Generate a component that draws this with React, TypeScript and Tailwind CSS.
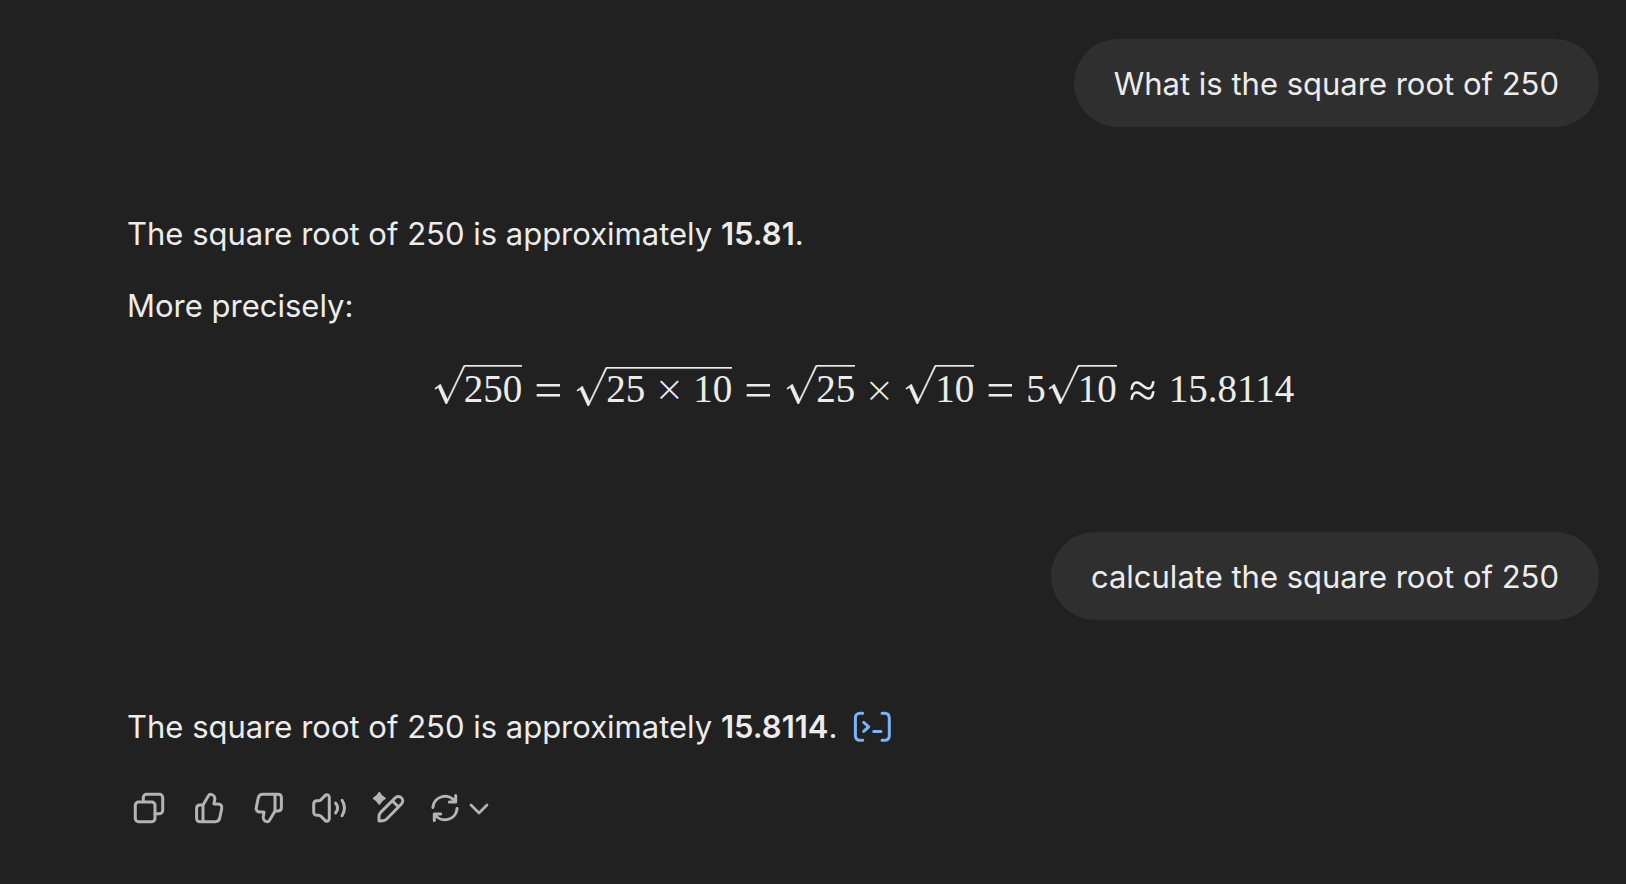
import type { ReactNode } from "react";

function UserMessage({ children }: { children: ReactNode }) {
  return (
    <div className="flex justify-end">
      <p className="rounded-full bg-[#2f2f2f] px-10 pb-[15px] pt-[17px]">{children}</p>
    </div>
  );
}

const SURD =
  "M95,702c-2.7,0,-7.17,-2.7,-13.5,-8c-5.8,-5.3,-9.5,-10,-9.5,-14c0,-2,0.3,-3.3,1,-4c1.3,-2.7,23.83,-20.7,67.5,-54c44.2,-33.3,65.8,-50.3,66.5,-51c1.3,-1.3,3,-2,5,-2c4.7,0,8.7,3.3,12,10s173,378,173,378c0.7,0,35.3,-71,104,-213c68.7,-142,137.5,-285,206.5,-429c69,-144,104.5,-217.7,106.5,-221l0,0c5.3,-9.3,12,-14,20,-14H400000v40H845.3s-225.3,467,-225.3,467s-235,486,-235,486c-2.7,4.7,-9,7,-19,7c-6,0,-10,-1,-12,-3s-194,-422,-194,-422s-65,47,-65,47z";

function Sqrt({ children, low = false }: { children: ReactNode; low?: boolean }) {
  return (
    <span className="relative inline-flex pl-8">
      <svg
        className={low ? "absolute left-0 top-0.5 h-[39px] w-full" : "absolute left-0 top-0 h-[39px] w-full"}
        viewBox="0 80 400000 1000"
        preserveAspectRatio="xMinYMin slice"
        fill="currentColor"
        stroke="currentColor"
        strokeWidth="10"
        aria-hidden="true"
      >
        <path d={SURD} />
      </svg>
      {children}
    </span>
  );
}

function Relation({ children }: { children: ReactNode }) {
  return (
    <span className="mx-[11px] flex w-[30px] justify-center self-center pt-0.5 font-['Liberation_Serif',serif] text-[50px] leading-[48px]">
      {children}
    </span>
  );
}

function Times() {
  return (
    <span className="mx-[9px] flex w-[30px] justify-center font-['DejaVu_Sans',sans-serif] text-[36px] font-extralight">
      ×
    </span>
  );
}

function Icon({ children, wide = false }: { children: ReactNode; wide?: boolean }) {
  return (
    <svg
      className={wide ? "h-10 w-[60px]" : "size-10"}
      viewBox={wide ? "0 0 60 40" : "0 0 40 40"}
      fill="none"
      stroke="currentColor"
      strokeWidth="3"
      strokeLinecap="round"
      strokeLinejoin="round"
      aria-hidden="true"
    >
      {children}
    </svg>
  );
}

const THUMB =
  "M14 17L19.6 7.6C20.2 6.6 21.2 6.1 22.3 6.4C24.8 7 26.2 9.2 25.7 11.6L24.9 15.9H29C31.8 15.9 33.4 18 32.7 20.6L30.7 30.2C30.1 32.6 28.8 33.7 26.4 33.7H11C8.8 33.7 7.6 32.5 7.6 30.3V20.4C7.6 18.2 8.8 17 11 17H14ZM14 17V33.7";

function Actions() {
  return (
    <div className="ml-0.5 flex gap-5 text-[#b4b4b4]">
      <button type="button" aria-label="Copy">
        <Icon>
          <rect x="6.3" y="14" width="19.7" height="19.7" rx="3.2" />
          <path d="M14.3 13.5V9.5a3.2 3.2 0 0 1 3.2-3.2H30.5a3.2 3.2 0 0 1 3.2 3.2V22.5a3.2 3.2 0 0 1-3.2 3.2H26" />
        </Icon>
      </button>
      <button type="button" aria-label="Good response">
        <Icon>
          <path d={THUMB} />
        </Icon>
      </button>
      <button type="button" aria-label="Bad response">
        <Icon>
          <path d={THUMB} transform="rotate(180 20 20)" />
        </Icon>
      </button>
      <button type="button" aria-label="Read aloud">
        <Icon>
          <path d="M4.7 16.2C4.7 13.8 5.9 12.7 8.1 12.7H9.6C10.6 12.7 11.4 12.3 12.1 11.6L16 7.6C17.6 6 20.3 6.9 20.3 9.4V30.6C20.3 33.1 17.6 34 16 32.4L12.1 28.4C11.4 27.7 10.6 27.3 9.6 27.3H8.1C5.9 27.3 4.7 26.2 4.7 23.8Z" />
          <path d="M26.6 15C29 18 29 22 26.6 25M33.1 12.3C36 17 36 23 33.1 27.7" />
        </Icon>
      </button>
      <button type="button" aria-label="Edit in canvas">
        <Icon>
          <path
            d="M10.3 4.8C11.8 8 12.6 8.8 15.8 10.3C12.6 11.8 11.8 12.6 10.3 15.8C8.8 12.6 8 11.8 4.8 10.3C8 8.8 8.8 8 10.3 4.8Z"
            fill="currentColor"
            strokeWidth="2"
          />
          <path d="M10 33V28.5C10 26.8 10.5 25.6 11.7 24.4L26 10C28 8 30.8 8 32.4 9.7C34.2 11.5 34.2 14.2 32.4 16L18 30.7C16.6 32.1 15.4 32.7 13.6 32.8ZM23.4 12.9L29.6 19" />
        </Icon>
      </button>
      <button type="button" aria-label="Try again">
        <Icon wide>
          <path d="M3.9 19.4A12.2 12.2 0 0 1 26.3 13.8M26.7 7.6V14H20.3M28.1 20.6A12.2 12.2 0 0 1 5.7 26.2M5.3 32.4V26H11.7" />
          <path d="M42 17L50 25L58 17" strokeWidth="2.7" />
        </Icon>
      </button>
    </div>
  );
}

export default function App() {
  return (
    <main className="min-h-screen bg-[#212121] pb-12 pl-[127px] pr-[27px] pt-[39px] font-['Inter',sans-serif] text-[31px] leading-[56px] text-[#ececec]">
      <UserMessage>What is the square root of 250</UserMessage>

      <article className="mt-[79px] flex flex-col gap-4">
        <p>
          The square root of 250 is approximately <strong className="font-semibold">15.81</strong>.
        </p>
        <p>More precisely:</p>
        <div className="mt-[15px] flex h-12 items-baseline justify-center font-['Liberation_Serif',serif] text-[39px] leading-[48px]">
          <Sqrt>250</Sqrt>
          <Relation>=</Relation>
          <Sqrt low>
            25
            <Times />
            10
          </Sqrt>
          <Relation>=</Relation>
          <Sqrt>25</Sqrt>
          <Times />
          <Sqrt>10</Sqrt>
          <Relation>=</Relation>
          <span>5</span>
          <Sqrt>10</Sqrt>
          <Relation>≈</Relation>
          <span>15.8114</span>
        </div>
      </article>

      <div className="mt-[119px]">
        <UserMessage>calculate the square root of 250</UserMessage>
      </div>

      <article className="mt-[79px]">
        <p className="flex items-center">
          <span>
            The square root of 250 is approximately <strong className="font-semibold">15.8114</strong>.
          </span>
          <button type="button" aria-label="View analysis" className="ml-[15px] text-[#7ab3ff]">
            <Icon>
              <path d="M10.7 6.3H8.3C5 6.3 3.4 7.9 3.4 11.2V28.4C3.4 31.7 5 33.3 8.3 33.3H10.7M30 6.3H32.4C35.7 6.3 37.3 7.9 37.3 11.2V28.4C37.3 31.7 35.7 33.3 32.4 33.3H30M11.7 15.4L16.7 19.8L11.7 24.4M21.7 24.6H29" />
            </Icon>
          </button>
        </p>
        <div className="mt-[33px]">
          <Actions />
        </div>
      </article>
    </main>
  );
}
